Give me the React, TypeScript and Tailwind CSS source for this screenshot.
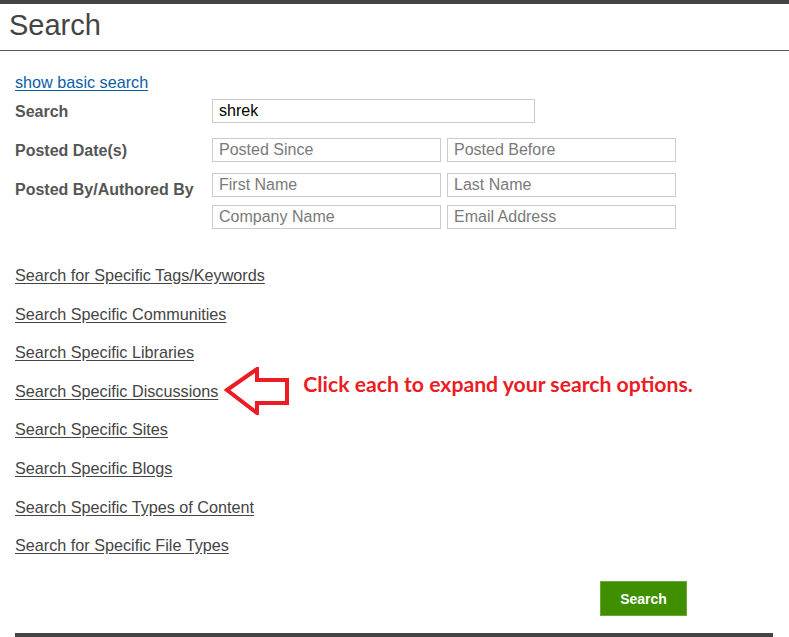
import React from "react";

const links = [
  "Search for Specific Tags/Keywords",
  "Search Specific Communities",
  "Search Specific Libraries",
  "Search Specific Discussions",
  "Search Specific Sites",
  "Search Specific Blogs",
  "Search Specific Types of Content",
  "Search for Specific File Types",
];

function Field({ placeholder, value, w }: { placeholder?: string; value?: string; w: string }) {
  return (
    <div className={`${w} h-[24px] border border-[#cccccc] bg-white flex items-center px-[6px] text-[16px] leading-none`}>
      {value ? <span className="text-black">{value}</span> : <span className="text-[#7a7a7a]">{placeholder}</span>}
    </div>
  );
}

function Arrow() {
  return (
    <svg width="66" height="48" viewBox="0 0 66 48" className="block">
      <polygon
        points="3,23 33,2 33,13 63,13 63,36 33,36 33,46"
        fill="white"
        stroke="#ec1c24"
        strokeWidth="4"
        strokeLinejoin="miter"
      />
    </svg>
  );
}

export default function App() {
  return (
    <div className="w-[789px] h-[637px] overflow-hidden bg-white font-['Liberation_Sans',Arial,sans-serif]">
      <div className="h-[4px] bg-[#444444]" />
      <div className="h-[47px] border-b border-[#555555] pl-[9px] pt-[5px]">
        <h1 className="text-[29px] leading-[33px] text-[#444444]">Search</h1>
      </div>
      <div className="px-[15px]">
        <div className="pt-[20px] h-[48px]">
          <a className="text-[16.2px] leading-[18px] text-[#0b5ea8] underline underline-offset-2">show basic search</a>
        </div>
        <div className="flex flex-col">
          <div className="flex items-center h-[24px]">
            <div className="w-[197px] text-[16px] font-bold text-[#555555] pt-[1px]">Search</div>
            <Field value="shrek" w="w-[323px]" />
          </div>
          <div className="flex items-center h-[24px] mt-[15px]">
            <div className="w-[197px] text-[16px] font-bold text-[#555555] pt-[2px]">Posted Date(s)</div>
            <div className="flex gap-[6px]">
              <Field placeholder="Posted Since" w="w-[229px]" />
              <Field placeholder="Posted Before" w="w-[229px]" />
            </div>
          </div>
          <div className="flex mt-[11px]">
            <div className="w-[197px] text-[16px] font-bold text-[#555555] pt-[5px]">Posted By/Authored By</div>
            <div className="flex flex-col gap-[8px]">
              <div className="flex gap-[6px]">
                <Field placeholder="First Name" w="w-[229px]" />
                <Field placeholder="Last Name" w="w-[229px]" />
              </div>
              <div className="flex gap-[6px]">
                <Field placeholder="Company Name" w="w-[229px]" />
                <Field placeholder="Email Address" w="w-[229px]" />
              </div>
            </div>
          </div>
        </div>
        <div className="flex flex-col gap-[20.6px] mt-[37px]">
          {links.map((l) => (
            <div key={l} className="flex items-center h-[18px]">
              <a className="text-[16.2px] leading-[18px] text-[#444444] underline underline-offset-2">{l}</a>
              {l === "Search Specific Discussions" && (
                <div className="flex items-center ml-[6px]">
                  <Arrow />
                  <span className="ml-[13px] font-['Lato',sans-serif] font-bold text-[21.2px] text-[#ec1c24] -mt-[11px]">
                    Click each to expand your search options.
                  </span>
                </div>
              )}
            </div>
          ))}
        </div>
        <div className="pl-[585px] mt-[27px]">
          <button className="w-[87px] h-[35px] bg-[#408f00] border border-[#6aa83a] text-white font-bold text-[14px] pt-[1px]">
            Search
          </button>
        </div>
        <div className="mt-[17px] w-[758px] h-[6px] bg-[#444444]" />
      </div>
    </div>
  );
}
